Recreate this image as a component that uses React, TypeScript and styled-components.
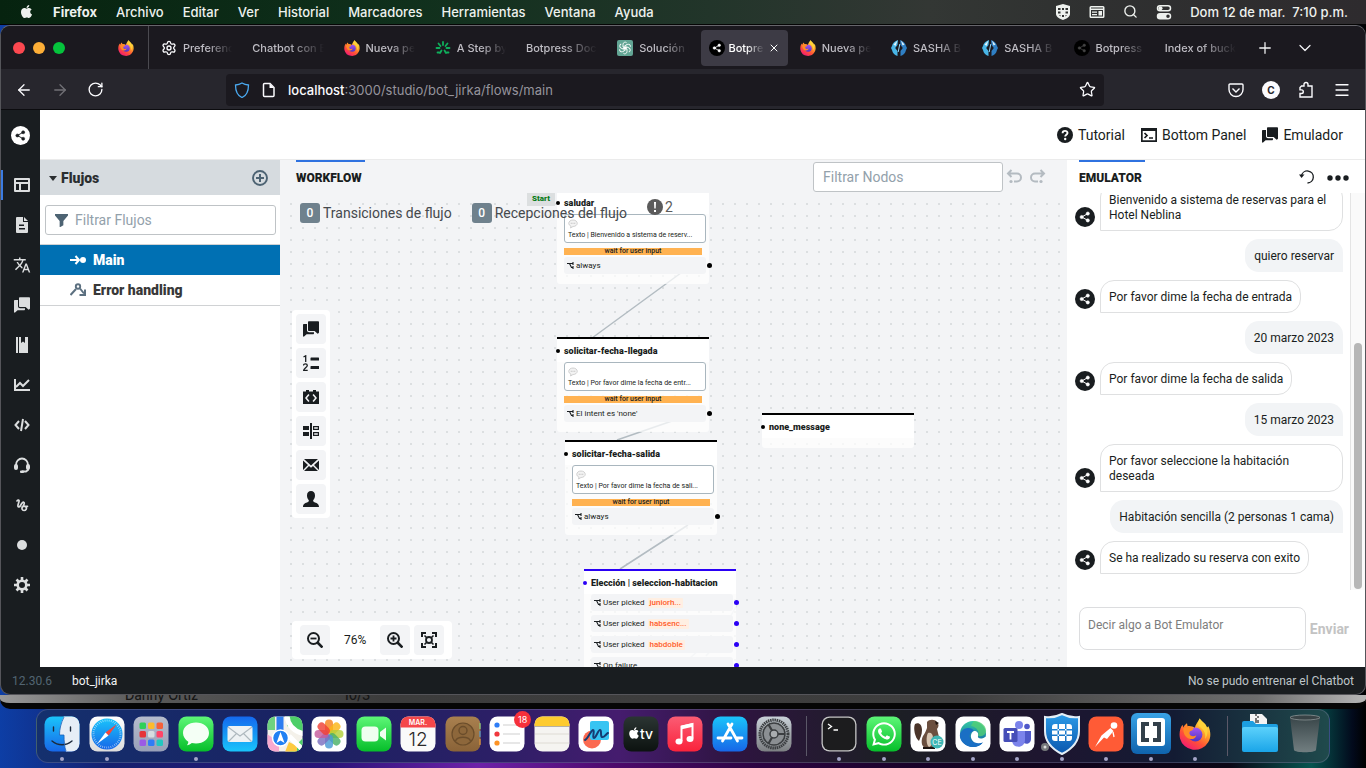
import React from "react";
import styled, { createGlobalStyle, css } from "styled-components";
import { FaApple, FaWhatsapp } from "react-icons/fa";
import { MdTranslate } from "react-icons/md";
import { Settings, Search, X, Plus, ChevronDown, Star, Menu, ArrowLeft, ArrowRight, RotateCw } from "lucide-react";

const GlobalStyle = createGlobalStyle`
  * { box-sizing: border-box; }
  body { margin: 0; background: #000; font-family: Roboto, "Liberation Sans", sans-serif; }
  button, input, textarea { font: inherit; color: inherit; }
  button { border: 0; padding: 0; background: none; cursor: pointer; }
  svg { display: block; flex: none; }
`;

const uiFont = `Inter, "Liberation Sans", sans-serif`;

/* ---------- desktop ---------- */

const Desktop = styled.div`
  height: 100vh;
  min-height: 640px;
  display: flex;
  flex-direction: column;
  overflow: hidden;
  background: linear-gradient(90deg, #0d3ea5 0%, #15206e 8%, #2a1478 24%, #6d21a8 35%, #4d0a6b 45%, #2b0440 56%, #12021f 72%, #0b0716 90%, #075550 96%, #020a1c 99%, #000 100%);
`;

const MenuBar = styled.header`
  flex: none;
  height: 25px;
  padding: 0 18px 1px 19px;
  display: flex;
  align-items: center;
  justify-content: space-between;
  color: #eef1ee;
  font: 500 13px/16px ${uiFont};
  background: linear-gradient(90deg, #06230f 0%, #10301c 30%, #22352a 52%, #333734 68%, #2f3030 80%, #2e2b2e 100%);
  border-bottom: 1px solid #050505;
`;

const MenuGroup = styled.nav<{ $gap: number }>`
  display: flex;
  align-items: center;
  gap: ${(p) => p.$gap}px;
`;

const MenuItem = styled.button<{ $bold?: boolean }>`
  font-weight: ${(p) => (p.$bold ? 700 : 500)};
`;

const Clock = styled.time`
  white-space: pre;
`;

/* ---------- browser window ---------- */

const Window = styled.section`
  flex: 1;
  min-height: 0;
  display: flex;
  flex-direction: column;
  overflow: hidden;
  background: #191d20;
  border: 1px solid #55555a;
  border-top-color: #66656b;
  border-radius: 10px;
`;

const TabStrip = styled.div`
  flex: none;
  height: 43px;
  display: flex;
  align-items: center;
  background: #1b191f;
  color: #bfbdc4;
  font: 500 11px/16px ${uiFont};
`;

const Lights = styled.div`
  width: 104px;
  flex: none;
  padding-left: 12px;
  display: flex;
  gap: 8px;
`;

const Light = styled.button<{ $color: string }>`
  width: 12px;
  height: 12px;
  border-radius: 50%;
  background: ${(p) => p.$color};
`;

const PinnedTab = styled.button`
  flex: none;
  width: 44px;
  height: 43px;
  padding-left: 13px;
  display: flex;
  align-items: center;
  border-right: 1px solid #4b4a50;
`;

const Tabs = styled.div`
  flex: 0 1 1095px;
  min-width: 0;
  margin-left: 2px;
  display: grid;
  grid-template-columns: repeat(12, minmax(0, 1fr));
`;

const Tab = styled.button<{ $active?: boolean }>`
  height: 36px;
  margin: 0 2px;
  padding: 0 8px;
  display: flex;
  align-items: center;
  gap: 6px;
  border-radius: 4px;
  ${(p) => p.$active && css`
    background: #3d3b45;
    color: #fff;
    gap: 4px;
  `}
`;

const TabLabel = styled.span`
  flex: 1;
  min-width: 0;
  overflow: hidden;
  white-space: nowrap;
  text-align: left;
  mask-image: linear-gradient(90deg, #000 50%, transparent 100%);
`;

const TabTools = styled.div`
  margin-left: 10px;
  display: flex;
  gap: 21px;
  color: #f3f3f5;
`;

const IconButton = styled.button<{ $dim?: boolean }>`
  flex: none;
  display: flex;
  align-items: center;
  justify-content: center;
  opacity: ${(p) => (p.$dim ? 0.35 : 1)};
`;

const NavBar = styled.div`
  flex: none;
  height: 41px;
  padding-top: 1px;
  display: flex;
  align-items: center;
  background: #27262d;
  border-bottom: 1px solid #0c0c0f;
  color: #fbfbfe;
`;

const NavButtons = styled.div`
  flex: none;
  width: 225px;
  padding-left: 14px;
  display: flex;
  gap: 18px;
`;

const AddressBar = styled.div`
  flex: 1;
  min-width: 0;
  height: 32px;
  padding: 0 8px;
  display: flex;
  align-items: center;
  gap: 11px;
  border-radius: 4px;
  background: #1b191f;
`;

const Address = styled.div`
  flex: 1;
  color: #96949c;
  font: 400 13px/20px ${uiFont};
  strong { color: #fbfbfe; font-weight: 500; }
`;

const NavTools = styled.div`
  flex: none;
  width: 261px;
  padding-right: 14px;
  display: flex;
  justify-content: flex-end;
  gap: 18px;
`;

const Account = styled.span`
  width: 18px;
  height: 18px;
  margin: 0 -1px;
  border-radius: 50%;
  background: #fbfbfe;
  color: #27262d;
  font: 700 10px/18px ${uiFont};
  text-align: center;
`;

/* ---------- studio ---------- */

const Studio = styled.div`
  flex: 1;
  min-height: 0;
  display: flex;
`;

const SideBar = styled.nav`
  flex: none;
  width: 39px;
  display: flex;
  flex-direction: column;
  align-items: stretch;
  background: #191d20;
  color: #dcdedf;
`;

const SideLogo = styled.a`
  height: 60px;
  padding: 16px 0 0 10px;
`;

const SideItem = styled.button<{ $active?: boolean }>`
  height: 30px;
  margin-bottom: 10px;
  padding-left: 3px;
  display: flex;
  align-items: center;
  justify-content: center;
  box-shadow: ${(p) => (p.$active ? "inset 2px 0 0 #3b7be0" : "none")};
`;

const StudioMain = styled.div`
  flex: 1;
  min-width: 0;
  display: flex;
  flex-direction: column;
  background: #fff;
`;

const TopBar = styled.div`
  flex: none;
  height: 50px;
  padding-right: 22px;
  display: flex;
  align-items: center;
  justify-content: flex-end;
  gap: 16px;
  border-bottom: 1px solid #ebebeb;
  color: #191d20;
`;

const TopAction = styled.button`
  display: flex;
  align-items: center;
  gap: 5px;
  font-size: 14px;
  line-height: 20px;
`;

const Panels = styled.div`
  flex: 1;
  min-height: 0;
  display: flex;
`;

const FlowsPanel = styled.aside`
  flex: none;
  width: 240px;
  background: #fff;
`;

const FlowsHeader = styled.div`
  height: 35px;
  padding: 0 12px 0 9px;
  display: flex;
  align-items: center;
  gap: 4px;
  background: #d6dbdf;
  color: #2b2e30;
  h2 { flex: 1; margin: 0; font-size: 14px; line-height: 20px; font-weight: 900; }
`;

const SearchBox = styled.label<{ $width?: number }>`
  height: 30px;
  padding: 0 9px;
  display: flex;
  align-items: center;
  gap: 7px;
  width: ${(p) => (p.$width ? `${p.$width}px` : "auto")};
  border: 1px solid #bfc3c6;
  border-radius: 3px;
  background: #fff;
  color: #4d6373;
  input {
    flex: 1;
    min-width: 0;
    padding: 0;
    border: 0;
    outline: 0;
    background: none;
    font-size: 14px;
    line-height: 20px;
  }
  input::placeholder { color: #93a1ab; opacity: 1; }
`;

const FlowSearch = styled.div`
  padding: 10px 4px 9px 5px;
`;

const FlowList = styled.ul`
  margin: 0;
  padding: 0;
  list-style: none;
  border-top: 1px solid #d0d2d4;
  border-bottom: 1px solid #d0d2d4;
`;

const FlowLink = styled.a<{ $active?: boolean }>`
  height: 30px;
  padding-left: 30px;
  display: flex;
  align-items: center;
  gap: 7px;
  text-decoration: none;
  font-size: 14px;
  line-height: 20px;
  font-weight: 900;
  color: ${(p) => (p.$active ? "#fff" : "#383838")};
  background: ${(p) => (p.$active ? "#0070b3" : "#fff")};
  svg { color: ${(p) => (p.$active ? "#fff" : "#5c7080")}; }
`;

const Workflow = styled.main`
  flex: 1;
  min-width: 0;
  display: flex;
  flex-direction: column;
  background: #f3f4f6;
`;

const PanelHeader = styled.div<{ $right: number; $left: number }>`
  flex: none;
  height: 33px;
  padding: 0 ${(p) => p.$right}px 0 ${(p) => p.$left}px;
  display: flex;
  align-items: center;
  justify-content: space-between;
`;

const PanelTab = styled.h2`
  height: 33px;
  margin: 0;
  padding: 8px 3px 0 0;
  border-top: 2px solid #2f72e0;
  color: #191d20;
  font-size: 12px;
  line-height: 16px;
  font-weight: 900;
`;

const HeaderTools = styled.div<{ $gap: number }>`
  display: flex;
  align-items: center;
  gap: ${(p) => p.$gap}px;
  color: #b4bbc1;
`;

/* ---------- canvas ---------- */

const Canvas = styled.div`
  flex: 1;
  min-height: 0;
  position: relative;
  overflow: hidden;
  background: conic-gradient(from 90deg at 10px 10px, #dcdfe1 25%, transparent 0) 0 0 / 12px 12px;
`;

const Links = styled.svg`
  position: absolute;
  inset: 0;
  width: 100%;
  height: 100%;
  fill: none;
  stroke: #b3bcc2;
  stroke-width: 1.5;
`;

const Node = styled.article<{ $x: number; $y: number; $color: string }>`
  position: absolute;
  left: ${(p) => p.$x}px;
  top: ${(p) => p.$y}px;
  width: 152px;
  padding-bottom: 10px;
  border-top: 2px solid ${(p) => p.$color};
  border-radius: 0 0 3px 3px;
  background: rgba(255, 255, 255, 0.7);
  color: #191d20;
  font-size: 7px;
  line-height: 10px;
`;

const NodeTitle = styled.h3`
  position: relative;
  height: 23px;
  margin: 0;
  padding: 6px 0 0 7px;
  background: #fff;
  font-size: 9px;
  line-height: 12px;
  font-weight: 900;
  white-space: nowrap;
`;

const Port = styled.i<{ $color: string; $out?: boolean }>`
  position: absolute;
  width: ${(p) => (p.$out ? 5 : 4)}px;
  height: ${(p) => (p.$out ? 5 : 4)}px;
  border-radius: 50%;
  background: ${(p) => p.$color};
  ${(p) => (p.$out ? "right: -6px; top: 6px;" : "left: -1px; top: 10px;")}
`;

const MessageBox = styled.div`
  height: 29px;
  margin: 0 3px 5px 7px;
  padding: 4px 3px 0;
  border: 1px solid #a9b6be;
  border-radius: 3px;
  background: #fff;
  line-height: 12px;
  p { margin: 0; white-space: nowrap; }
`;

const WaitBar = styled.div`
  height: 7px;
  margin: 0 7px 2px;
  background: #ffb251;
  font-weight: 500;
  line-height: 7px;
  text-align: center;
`;

const Row = styled.div<{ $gap: number }>`
  position: relative;
  height: 17px;
  margin: 0 3px ${(p) => p.$gap}px 7px;
  padding-left: 3px;
  display: flex;
  align-items: center;
  gap: 2px;
  border-radius: 3px;
  background: #f3f4f6;
  font-size: 8px;
`;

const Pick = styled.em`
  margin-left: 1px;
  padding: 0 2px;
  border-radius: 1px;
  background: #ffefe2;
  color: #ff5c28;
  font-style: normal;
  font-weight: 500;
`;

const StartTag = styled.span`
  position: absolute;
  left: 247px;
  top: 0;
  width: 28px;
  height: 13px;
  background: #dcdfe0;
  color: #0a7d1c;
  font-size: 8px;
  line-height: 12px;
  font-weight: 900;
  text-align: center;
`;

const Counters = styled.div`
  position: absolute;
  left: 20px;
  top: 4px;
  display: flex;
  align-items: flex-end;
  gap: 20px;
  color: #45494d;
  font-size: 14px;
  line-height: 20px;
`;

const Counter = styled.span`
  display: flex;
  gap: 3px;
  b {
    width: 20px;
    border-radius: 3px;
    background: #6f818d;
    color: #fff;
    font-size: 12px;
    font-weight: 500;
    text-align: center;
  }
`;

const Warning = styled.span`
  height: 20px;
  margin-bottom: 6px;
  display: flex;
  align-items: center;
  gap: 2px;
  color: #5b5b5b;
`;

const ToolPalette = styled.div`
  position: absolute;
  left: 12px;
  top: 117px;
  padding: 4px;
  display: flex;
  flex-direction: column;
  gap: 4px;
  border-radius: 4px;
  background: #fff;
  color: #191d20;
`;

const Tool = styled.button`
  width: 30px;
  height: 30px;
  display: flex;
  align-items: center;
  justify-content: center;
  border-radius: 4px;
  background: #f3f4f6;
`;

const ZoomBar = styled.div`
  position: absolute;
  left: 12px;
  bottom: 8px;
  width: 160px;
  height: 38px;
  padding: 0 8px;
  display: flex;
  align-items: center;
  border-radius: 4px;
  background: #fff;
  color: #191d20;
  font-size: 12px;
  output { width: 51px; text-align: center; }
  button + button { margin-left: 4px; }
`;

/* ---------- emulator ---------- */

const Emulator = styled.aside`
  flex: none;
  width: 298px;
  display: flex;
  flex-direction: column;
  background: #fff;
  color: #191d20;
`;

const ChatScroll = styled.div`
  flex: 1;
  min-height: 0;
  display: flex;
`;

const Messages = styled.div`
  flex: 1;
  min-width: 0;
  padding: 0 7px 16px 8px;
  display: flex;
  flex-direction: column;
  justify-content: flex-end;
  gap: 8px;
  overflow: hidden;
  font-size: 12px;
  line-height: 15px;
`;

const BotLine = styled.div`
  display: flex;
  align-items: flex-end;
  gap: 5px;
  svg { margin-bottom: 4px; }
`;

const BotBubble = styled.p`
  margin: 0;
  padding: 9px 8px 7px;
  border: 1px solid #dfe0e1;
  border-radius: 14px 14px 14px 0;
`;

const UserBubble = styled.p`
  align-self: flex-end;
  margin: 0;
  padding: 10px 9px 8px;
  border-radius: 14px 14px 0 14px;
  background: #f2f4f6;
`;

const ScrollTrack = styled.div`
  flex: none;
  width: 15px;
  padding: 0 0 1px 3px;
  display: flex;
  flex-direction: column;
  justify-content: flex-end;
  border-left: 1px solid #e4e4e4;
  background: #fafafa;
`;

const ScrollThumb = styled.div`
  width: 8px;
  height: 62%;
  border-radius: 4px;
  background: #b7b7b7;
`;

const Composer = styled.form`
  flex: none;
  padding: 17px 16px 17px 12px;
  display: flex;
  align-items: center;
  gap: 4px;
  textarea {
    flex: 1;
    min-width: 0;
    height: 43px;
    padding: 9px 8px;
    resize: none;
    outline: 0;
    border: 1px solid #dcdddf;
    border-radius: 8px;
    font-size: 12px;
    line-height: 16px;
  }
  textarea::placeholder { color: #7d7d7d; opacity: 1; }
  button { color: #c3c3c3; font-size: 14px; font-weight: 700; }
`;

const StatusBar = styled.footer`
  flex: none;
  height: 27px;
  padding: 0 11px;
  display: flex;
  align-items: center;
  color: #bfc6ca;
  font-size: 12px;
  line-height: 16px;
  span:first-child { width: 60px; color: #526572; }
  strong { flex: 1; color: #f2f3f4; font-weight: 400; }
`;

/* ---------- back window and dock ---------- */

const BackWindow = styled.div`
  flex: none;
  height: 14px;
  padding: 0 0 0 125px;
  display: flex;
  gap: 145px;
  overflow: hidden;
  border-bottom: 6px solid #060606;
  border-radius: 0 0 10px 10px;
  background: linear-gradient(90deg, #9a9a9a 0%, #5a5a5a 10%, #3c3c3c 28%, #3e3e3e 70%, #6d6d6d 92%, #b5b5b5 100%);
  color: #161616;
  font: 500 13px/8px ${uiFont};
  span { margin-top: -4px; }
`;

const Dock = styled.nav`
  flex: none;
  height: 54px;
  margin: 0 36px 5px;
  padding: 0 6px 0 7px;
  display: flex;
  align-items: center;
  justify-content: space-between;
  border: 1px solid rgba(150, 150, 190, 0.3);
  border-radius: 12px;
  background: linear-gradient(90deg, #14306e 0%, #1a2262 20%, #2b1f66 35%, #451c6e 45%, #2e1440 54%, #1c1f24 66%, #1e1530 78%, #131b33 88%, #1f4a4c 100%);
`;

const DockItem = styled.button<{ $running?: boolean }>`
  position: relative;
  width: 36px;
  height: 36px;
  margin-bottom: 4px;
  display: flex;
  align-items: center;
  justify-content: center;
  ${(p) => p.$running && css`
    &::after {
      content: "";
      position: absolute;
      left: 16px;
      bottom: -9px;
      width: 4px;
      height: 4px;
      border-radius: 50%;
      background: #a5a5c8;
    }
  `}
`;

const DockBadge = styled.span`
  position: absolute;
  right: -6px;
  top: -5px;
  width: 17px;
  height: 17px;
  border-radius: 50%;
  background: #f5303a;
  color: #fff;
  font: 400 9px/17px ${uiFont};
  text-align: center;
`;

const DockSeparator = styled.span`
  width: 12px;
  height: 40px;
  background: linear-gradient(#5b5868 0 0) center / 1px 100% no-repeat;
`;

/* ---------- icons ---------- */

type IconProps = { size?: number; box?: number; children: React.ReactNode };
const Icon = ({ size = 16, box = 16, children }: IconProps) => (
  <svg width={size} height={size} viewBox={`0 0 ${box} ${box}`} fill="currentColor" aria-hidden="true">
    {children}
  </svg>
);
const line = (w: number) => ({ fill: "none", stroke: "currentColor", strokeWidth: w });

const ChatIcon = () => (
  <Icon>
    <path d="M6.500 11.200A2 2 0 0 1 4 9.200V3H1c-.55 0-1 .45-1 1v11.200l.8.5L3.600 13.200H10c.55 0 1-.45 1-1v-1z" />
    <path d="M15 .3H6c-.55 0-1 .45-1 1V9c0 .55.45 1 1 1h5.600l3 2.700 1.200-.6.2-.8V1.300c0-.55-.45-1-1-1z" />
  </Icon>
);

const ShareIcon = ({ size, bg, fg }: { size: number; bg: string; fg: string }) => (
  <Icon size={size} box={20}>
    <circle cx="10" cy="10" r="10" fill={bg} />
    <g fill={fg} stroke={fg}>
      <circle cx="6.700" cy="10" r="1.600" strokeWidth=".6" />
      <circle cx="12.800" cy="6.600" r="1.600" strokeWidth=".6" />
      <circle cx="12.800" cy="13.400" r="1.600" strokeWidth=".6" />
      <path d="M12.800 6.600 6.700 10l6.100 3.400" fill="none" strokeWidth="1" />
    </g>
  </Icon>
);

const FirefoxLogo = ({ size }: { size: number }) => (
  <Icon size={size}>
    <defs>
      <linearGradient id="fxBody" x1=".85" y1="0" x2=".2" y2="1">
        <stop offset="0" stopColor="#fff44f" />
        <stop offset=".35" stopColor="#ffa52a" />
        <stop offset=".65" stopColor="#ff5236" />
        <stop offset="1" stopColor="#f1127c" />
      </linearGradient>
      <linearGradient id="fxGlobe" x1="0" y1="0" x2="0" y2="1">
        <stop offset="0" stopColor="#a456f0" />
        <stop offset="1" stopColor="#4b34c4" />
      </linearGradient>
    </defs>
    <path fill="url(#fxBody)" d="M10.300.2c1 1.300 2 1.900 2.900 3 .5.700.6 1 .8 1.600l.7-.7c1.200 2.600 1.400 5.600-.1 8A7.700 7.700 0 0 1 .5 10.200C-.1 7.300.6 4.900 1.800 3.400l.3 1.300C2.700 3.700 3.300 3 4 2.600l.3 1.500c1.500-.2 2.700.200 3.600.9C8.200 3.100 9.500 2 10.300.2z" />
    <circle cx="8.200" cy="8.300" r="3.500" fill="url(#fxGlobe)" />
    <path fill="#ff8a26" d="M2.200 5.200c1.500-.9 3.600-.9 5 .1 0 .8-.9 1.100-1.700 1.300-.5.700-.3 1.500.300 2.100.8.600 2 .4 2.900-.1-.5 1.600-2 2.300-3.500 1.800C3.200 9.700 2 7.500 2.200 5.200z" />
    <path fill="#ffd43a" d="M10.300.2c1 1.300 2 1.900 2.900 3 1.400 2.200 1.500 5-.1 7.300.4-2.900-.8-4.900-3.100-6.200C9.200 3.300 9.700 1.600 10.300.2z" opacity=".85" />
  </Icon>
);

const GptLogo = () => (
  <Icon>
    <rect width="16" height="16" rx="2" fill="#62a594" />
    <g fill="none" stroke="#fff" strokeWidth=".9">
      {[0, 60, 120, 180, 240, 300].map((a) => (
        <path key={a} transform={`rotate(${a} 8 8)`} d="M6 7V4.300a2.200 2.200 0 0 1 3.600-1.600M6 6.900l4 2.300" />
      ))}
    </g>
  </Icon>
);

const LeafLogo = () => (
  <Icon>
    <g stroke="#0fae5b" strokeWidth="1.800" strokeLinecap="round">
      <path d="M8 2v3M3.500 3.500 5.500 6M12.500 3.500l-2 2.500M1.500 8h3M14.500 8h-3M4 12.500H2.500M6.500 10.500 5 13M9.500 10.500 11 13M12 12.500h1.500" />
    </g>
  </Icon>
);

const SashaLogo = () => (
  <Icon>
    <path d="M7 0C4 1 1.500 3 1 6L0 8l1 2c.5 3 3 5.500 5.500 6V11L4.200 8 6.500 5z" fill="#48b5e6" />
    <path d="M9 0c3 1 5.500 3 6 6l1 2-1 2c-.5 3-3 5.500-5.500 6V11L11.800 8 9.500 5z" fill="#2f7fc4" />
    <path d="M6.500.5 2.500 4.500l2 1.500zM10 .5l3.500 4-2 1z" fill="#e2f5fc" />
    <path d="m7.200 12 1.600-8" stroke="#8fd3f2" strokeWidth="1" />
  </Icon>
);

const ConditionIcon = () => (
  <Icon size={7} box={14}>
    <path {...line(2.200)} d="M0 3h5l4 8h4M6 3h7M12 0v6M12 8v6" />
  </Icon>
);

const BubbleIcon = () => (
  <Icon size={10} box={20}>
    <path fill="#f3f3f3" stroke="#c4c4c4" strokeWidth="1.500" d="M10 2c5 0 8.500 3 8.500 6.500S15 15 10 15l-5 3 1-3.700C3 13 1.500 11 1.500 8.500 1.500 5 5 2 10 2z" />
    <path stroke="#aaa" strokeWidth="1.500" strokeDasharray="2 1.500" d="M5.500 8.500h9" />
  </Icon>
);

const sideIcons: React.ReactNode[] = [
  <Icon key="layout"><path fillRule="evenodd" d="M1 1h14a1 1 0 0 1 1 1v12a1 1 0 0 1-1 1H1a1 1 0 0 1-1-1V2a1 1 0 0 1 1-1zm1 2v2h12V3zm0 4v6h3V7zm5 0v6h7V7z" /></Icon>,
  <Icon key="document"><path fillRule="evenodd" d="M2.500 0H9v5h5v10a1 1 0 0 1-1 1H3a1 1 0 0 1-1-1V1zM10 0l4 4h-4zM5 7.500V9h5V7.500zM5 11v1.500h6V11z" /></Icon>,
  <MdTranslate key="translate" size={18} />,
  <ChatIcon key="chat" />,
  <Icon key="book"><path d="M2 0h2v16H2zM5 0h2v6l2-1.500L11 6V0h3v16H5z" /></Icon>,
  <Icon key="chart"><path {...line(2)} d="M1 2v11h15M2 10l4-4 3 3 6-6" /></Icon>,
  <Icon key="code"><path {...line(2)} d="M5 4 1.500 8 5 12M11 4l3.500 4L11 12M9 2 7 14" /></Icon>,
  <Icon key="headset"><path {...line(1.800)} d="M2 8a6 6.500 0 0 1 12 0v5l-2 1.500H8" /><rect y="7" width="4" height="6" rx="2" /><rect x="12" y="7" width="4" height="6" rx="2" /><rect x="6" y="13.500" width="4" height="2.500" rx="1" /></Icon>,
  <Icon key="gesture"><path {...line(1.700)} strokeLinecap="round" d="M3 4c.5-1.500 2.500-1.200 2 .5L4 8c-.5 2.500 1.500 2.500 2.500.5S9 4.500 10 5.500s-.5 3-1.500 4.500-.5 3.500 1.500 3.500 3-2 2-3.500-3-.5-4 0M10.500 9.300h3" /></Icon>,
  <Icon key="record"><circle cx="8" cy="8" r="5" /></Icon>,
  <Icon key="cog">
    <circle cx="8" cy="8" r="4.300" {...line(2.600)} />
    <path {...line(2.600)} d="M8 0v3M8 13v3M0 8h3M13 8h3M2.500 2.500l2 2M11.500 11.500l2 2M13.500 2.500l-2 2M4.500 11.500l-2 2" />
  </Icon>,
];

const sideNames = ["Flujos", "Contenido", "Traducciones", "Conversaciones", "Biblioteca", "Analítica", "Código", "Soporte", "NLU", "Estado", "Configuración"];

const toolIcons: React.ReactNode[] = [
  <ChatIcon key="say" />,
  <Icon key="choice"><path {...line(1.300)} d="M.5 2 2.700.8V7M.5 10.500c0-2.200 3.800-2 3.800 0C4.300 12 .7 13.500.7 15.300h4" /><path d="M8 2.500h7.500a.5.5 0 0 1 .5.500v2.500H7.500V3zM8 11h8v3H7.500v-2.500z" /></Icon>,
  <Icon key="execute"><path fillRule="evenodd" d="M3 1h3v1.500h4V1h3v1.500h3V15H0V2.500h3zm3.500 5L5.300 5 2 9l3.300 4 1.200-1L4 9zm3 0L12 9l-2.500 3 1.200 1L14 9l-3.300-4z" /></Icon>,
  <Icon key="router"><path d="M7 0h2v16H7zM0 3h6v4H0zM0 9h6v4H0z" /><path {...line(1.200)} d="M10.600 3.600h4.800v2.800h-4.800zM10.600 9.600h4.800v2.800h-4.800z" /></Icon>,
  <Icon key="email"><path d="M0 3.500v9.500l5-5zM1 2l7 6.500L15 2zM16 3.500V13l-5-5zM6 9l-5 5h14l-5-5-2 1.800z" /></Icon>,
  <Icon key="person"><path d="M8 0c2.500 0 4 1.500 4 4.500 0 2-.8 3.500-1.800 4.800-.3 1.200.3 1.700 1.800 2.200 2.200.8 4 1.500 4 4.500H0c0-3 1.800-3.700 4-4.500 1.500-.5 2.100-1 1.800-2.200C4.800 8 4 6.500 4 4.500 4 1.500 5.500 0 8 0z" /></Icon>,
];

const ZoomIcon = ({ plus }: { plus?: boolean }) => (
  <Icon>
    <circle cx="6.500" cy="6.500" r="5.500" {...line(2)} />
    <path {...line(2.600)} d="m10.500 10.500 5 5" />
    <path {...line(1.800)} d={plus ? "M3.500 6.500h6M6.500 3.500v6" : "M3.500 6.500h6"} />
  </Icon>
);

const UndoIcon = ({ flip }: { flip?: boolean }) => (
  <Icon>
    <g transform={flip ? "matrix(-1 0 0 1 16 0)" : undefined}>
      <path {...line(2)} d="M5.500 1 2 4.500 5.500 8M2 4.500h9a3.500 3.500 0 0 1 0 8H8" />
      <circle cx="5" cy="12.500" r="1.600" />
    </g>
  </Icon>
);

/* ---------- dock artwork ---------- */

const Tile = ({ fill, children }: { fill: string; children?: React.ReactNode }) => (
  <svg width="36" height="36" viewBox="0 0 36 36" aria-hidden="true">
    <rect x=".5" y=".5" width="35" height="35" rx="8" fill={fill} />
    {children}
  </svg>
);

const Gradients = () => (
  <svg width="0" height="0" style={{ position: "absolute" }} aria-hidden="true">
    <defs>
      {[
        ["gBlue", "#1ac4fb", "#1767e8"],
        ["gMail", "#1468ee", "#19c5fb"],
        ["gGreen", "#5df777", "#06be2a"],
        ["gGrey", "#b5bccd", "#98a0b8"],
        ["gWhite", "#ffffff", "#dcdcdc"],
        ["gBrown", "#a9804f", "#8a6338"],
        ["gTv", "#2b3533", "#0c1210"],
        ["gMusic", "#fb5c74", "#fa233b"],
        ["gSys", "#c9d1d8", "#7c7f82"],
        ["gShield", "#2b9be8", "#0a56ad"],
        ["gFolder", "#5cd1fb", "#1aa5e8"],
        ["gBracket", "#39a3e6", "#0f63ad"],
        ["gEdge", "#35c9a4", "#0c59a4"],
        ["gTrash", "#3c4649", "#7b8587"],
      ].map(([id, a, b]) => (
        <linearGradient key={id} id={id} x1="0" y1="0" x2="0" y2="1">
          <stop offset="0" stopColor={a} />
          <stop offset="1" stopColor={b} />
        </linearGradient>
      ))}
      <clipPath id="tileClip"><rect x=".5" y=".5" width="35" height="35" rx="8" /></clipPath>
    </defs>
  </svg>
);

const petals = ["#f5821f", "#fbb416", "#b3cf3b", "#4bb166", "#4a9ad4", "#7b6fc0", "#c65b9c", "#ef4136"];
const padColors = ["#2fd058", "#fdbb2c", "#f5603a", "#e5343a", "#d6dde0", "#ff4468", "#9b5ae5", "#2f7df6", "#22c7c0"];

type DockApp = { name: string; running?: boolean; badge?: string; art: React.ReactNode };

const leftApps: DockApp[] = [
  { name: "Finder", running: true, art: (
    <Tile fill="url(#gBlue)">
      <path clipPath="url(#tileClip)" fill="#e6eef6" d="M20 0c-3 6-4.500 12-4.500 19H20c0 6 .5 12 2 17h14V0z" />
      <path d="M9.500 11v4M26.500 11v4M8 25c6 5 14 5 20 0" fill="none" stroke="#1c2a3d" strokeWidth="1.400" strokeLinecap="round" />
      <path d="M20 1c-3 6-4.500 12-4.500 18H20c0 6 .5 12 2 16" fill="none" stroke="#1d5fb8" strokeWidth=".8" />
    </Tile>) },
  { name: "Safari", running: true, art: (
    <Tile fill="url(#gWhite)">
      <circle cx="18" cy="18" r="15.500" fill="url(#gBlue)" />
      <circle cx="18" cy="18" r="13.500" fill="none" stroke="#fff" strokeWidth="2" strokeDasharray=".6 1.500" opacity=".7" />
      <path fill="#f5463c" d="m28 8-8.500 11.500-3-3z" /><path fill="#fff" d="m8 28 8.500-11.500 3 3z" />
    </Tile>) },
  { name: "Launchpad", art: (
    <Tile fill="url(#gGrey)">
      {padColors.map((c, i) => <rect key={c} x={6.500 + (i % 3) * 8.500} y={6.500 + Math.floor(i / 3) * 8.500} width="6.500" height="6.500" rx="1.500" fill={c} />)}
    </Tile>) },
  { name: "Mensajes", running: true, art: (
    <Tile fill="url(#gGreen)">
      <path fill="#f4fff5" d="M18 6.500c7.500 0 13 4.500 13 10.500s-5.500 10.500-13 10.500c-1.500 0-3-.2-4.200-.5-1.300 1.300-3 2-5 2.200 1-1 1.500-2.200 1.500-3.500C7 23.500 5 20.500 5 17 5 11 10.500 6.500 18 6.500z" />
    </Tile>) },
  { name: "Mail", art: (
    <Tile fill="url(#gMail)">
      <rect x="5.500" y="10" width="25" height="16" rx="2" fill="#eef2f4" />
      <path d="m6 11 12 9 12-9M6.500 25.500l8-8M29.500 25.500l-8-8" fill="none" stroke="#aeb8be" strokeWidth="1.100" />
    </Tile>) },
  { name: "Mapas", art: (
    <Tile fill="#f4f1ea">
      <g clipPath="url(#tileClip)">
        <path fill="#4ccf68" d="M20 0h16v16L20 10zM22 36l14-14v14z" />
        <path fill="#f7a9cf" d="M0 18l12 8v10H0z" />
        <path fill="#fdca40" d="M22 26l8 4v6H18z" />
        <path fill="#6ed27f" d="M0 0h8v14H0z" />
        <path stroke="#2d7df0" strokeWidth="7" d="M13 0v26" />
        <path stroke="#fff" strokeWidth="5" fill="none" d="M20-2c0 12 8 18 18 20M22 20l14 14" />
        <circle cx="13.500" cy="22" r="8" fill="#2080f3" stroke="#fff" strokeWidth="1.500" />
        <path fill="#fff" d="m13.500 16 4 11-4-2.500-4 2.500z" />
      </g>
    </Tile>) },
  { name: "Fotos", art: (
    <Tile fill="#fff">
      {petals.map((c, i) => <rect key={c} x="14" y="3.500" width="8" height="14" rx="4" fill={c} opacity=".82" transform={`rotate(${i * 45} 18 18)`} />)}
    </Tile>) },
  { name: "FaceTime", art: (
    <Tile fill="url(#gGreen)">
      <rect x="5.500" y="10.500" width="17" height="15" rx="4" fill="#effff0" /><path fill="#effff0" d="m24 16 6-4.500v13L24 20z" />
    </Tile>) },
  { name: "Calendario", art: (
    <Tile fill="#fafafa">
      <path clipPath="url(#tileClip)" fill="#f5474a" d="M0 0h36v11.500H0z" />
      <text x="18" y="9" textAnchor="middle" fontSize="7" fontWeight="600" fontFamily="Inter" fill="#fff">MAR.</text>
      <text x="18" y="29.500" textAnchor="middle" fontSize="19" fontFamily="Inter" fontWeight="300" fill="#2a2a2a">12</text>
    </Tile>) },
  { name: "Contactos", art: (
    <Tile fill="url(#gBrown)">
      <circle cx="18" cy="18" r="11" fill="#8d673b" stroke="#6b4d2b" strokeWidth="1.200" />
      <circle cx="18" cy="14.500" r="4" fill="none" stroke="#6b4d2b" strokeWidth="1.400" />
      <path d="M10.500 25c2-5 13-5 15 0" fill="none" stroke="#6b4d2b" strokeWidth="1.400" />
      <path d="M35 7v6" stroke="#8d8" /><path d="M35 15v6" stroke="#4aa3e8" /><path d="M35 23v6" stroke="#f0a040" />
    </Tile>) },
  { name: "Recordatorios", badge: "18", art: (
    <Tile fill="#fff">
      {["#2f7df6", "#f0383d", "#fd9426"].map((c, i) => (
        <g key={c}><circle cx="8" cy={9 + i * 9} r="2.600" fill={c} /><path d={`M14 ${9 + i * 9}h17`} stroke="#cfcfcf" /></g>
      ))}
    </Tile>) },
  { name: "Notas", art: (
    <Tile fill="#f5f4f1">
      <path clipPath="url(#tileClip)" fill="#fdcb2f" d="M0 0h36v10H0z" /><path d="M1 10.500h34" stroke="#b5b1a2" /><path d="M1 18h34M1 27h34" stroke="#dedbd4" />
    </Tile>) },
  { name: "Freeform", art: (
    <Tile fill="#fff">
      <circle cx="14" cy="23.500" r="9" fill="#fb6a51" /><rect x="12" y="5" width="19" height="19" rx="2" fill="#38c4f2" />
      <path d="M7 24c3-1 6-10 8-10s-1 8 1 8 4-8 6-8 0 6 2 7 4-3 6-4" fill="none" stroke="#163b72" strokeWidth="2" strokeLinecap="round" />
    </Tile>) },
  { name: "TV", art: (
    <Tile fill="url(#gTv)">
      <FaApple x="4.500" y="10.500" size={13} color="#fff" />
      <text x="17" y="23" fontSize="14" fontWeight="500" fontFamily="Inter" fill="#fff">tv</text>
    </Tile>) },
  { name: "Música", art: (
    <Tile fill="url(#gMusic)">
      <path d="M14.500 25V10.500l11-2.500v14.500" fill="none" stroke="#fff" strokeWidth="2" /><path stroke="#fff" strokeWidth="3.500" d="m14.500 11.500 11-2.500" />
      <ellipse cx="12" cy="25.500" rx="3.500" ry="3" fill="#fff" /><ellipse cx="23" cy="23" rx="3.500" ry="3" fill="#fff" />
    </Tile>) },
  { name: "App Store", art: (
    <Tile fill="url(#gBlue)">
      <path d="M16 8l9.500 17M20 8 10.500 25M6 22h13M24 22h6" stroke="#fff" strokeWidth="2.800" strokeLinecap="round" />
    </Tile>) },
  { name: "Ajustes", art: (
    <Tile fill="url(#gSys)">
      <circle cx="18" cy="18" r="14" fill="none" stroke="#3b3e41" strokeWidth="3" strokeDasharray="1.500 .7" />
      <circle cx="18" cy="18" r="11" fill="#8b8f93" stroke="#3b3e41" strokeWidth="1.500" />
      <circle cx="18" cy="18" r="4" fill="#a9adb0" stroke="#3b3e41" strokeWidth="1.500" />
      <path d="M22 18h7M16 14.500 12.500 8.500M16 21.500l-3.500 6" stroke="#3b3e41" strokeWidth="2.200" />
    </Tile>) },
];

const rightApps: DockApp[] = [
  { name: "Terminal", running: true, art: (
    <Tile fill="#c5c5c5">
      <rect x="1.800" y="1.800" width="32.400" height="32.400" rx="7" fill="#1c1c1e" />
      <path d="m7 8 3.500 2.500L7 13M12.500 14H17" fill="none" stroke="#fff" strokeWidth="1.300" />
    </Tile>) },
  { name: "WhatsApp", running: true, art: (
    <Tile fill="url(#gGreen)"><FaWhatsapp x="4.500" y="4.500" size={27} color="#fff" /></Tile>) },
  { name: "DBeaver", running: true, art: (
    <Tile fill="#fff">
      <path fill="#4a342a" d="M5 8c4-2 7 1 7 6s-2 8-3 11C5 22 3 12 5 8z" />
      <path fill="#6b4f3f" d="M17 6c2-3 8-3 10 0 2 2 2 5 0 7l2 8c1 6-1 10-5 11h-9c-4-2-4-8-2-12 2-3 3-5 4-8z" />
      <path fill="#d9c7b3" d="M18 17c3-1 5 1 5 5s-1 8-4 9c-3-2-3-11-1-14z" />
      <path fill="#1d1410" d="M25 5l4 2-3 2zM13 31h12v2H13z" />
      <circle cx="27" cy="26" r="6.500" fill="#3eb6b4" />
      <text x="27" y="28.500" textAnchor="middle" fontSize="7" fontFamily="Inter" fill="#fff">CE</text>
    </Tile>) },
  { name: "Edge", running: true, art: (
    <Tile fill="#fff">
      <circle cx="18" cy="18" r="13" fill="url(#gEdge)" />
      <path fill="#1a6fc4" d="M5 18C7 11 17 10 19 15c-4 1-6 5-3 9s9 3 12 2c-3 5-10 6-15 4S4 23 5 18z" />
      <path fill="#fff" d="M19 15c3 0 5 2 4 5-.5 1.500 1 3 4 2.500 2-.5 4-2 4-2l1 4-4 2c-4 1.500-9 1-11-2.500-2.500-4-.5-8 2-9z" />
      <path fill="#55d072" d="M19 5c8 0 13 6 12 11-1 4-6 5-8 4 2-4-1-9-7-10 1-3 3-5 3-5z" opacity=".75" />
    </Tile>) },
  { name: "Teams", running: true, art: (
    <Tile fill="#fff">
      <circle cx="20" cy="9" r="4" fill="#7b83eb" /><circle cx="28" cy="10.500" r="2.800" fill="#5059c9" />
      <path fill="#5059c9" d="M24 15h8v8c0 4-4 6-7 4z" /><path fill="#7b83eb" d="M13 15h13v9c0 9-13 9-13 0z" />
      <rect x="4.500" y="12" width="14" height="14" rx="1.500" fill="#464eb8" /><path d="M8 16h7M11.500 16v7.500" stroke="#fff" strokeWidth="1.800" />
    </Tile>) },
  { name: "FortiClient", running: true, art: (
    <svg width="36" height="36" viewBox="0 0 36 36" aria-hidden="true" overflow="visible">
      <path transform="translate(0 -2)" fill="url(#gShield)" stroke="#e4eef6" strokeWidth="2" d="M1 3c6 1 11 0 17-3 6 3 11 4 17 3v14c0 11-7 18-17 23C8 35 1 28 1 17z" />
      <path fill="#fff" fillRule="evenodd" d="M11 8h14a3 3 0 0 1 3 3v11a3 3 0 0 1-3 3H11a3 3 0 0 1-3-3V11a3 3 0 0 1 3-3zm2.500 0v17H15V8zM21 8v17h1.500V8zM8 13v1.500h20V13zm0 5.500V20h20v-1.500z" />
      <circle cx="1" cy="31" r="4" fill="#76797b" /><circle cx="1" cy="31" r="1.500" fill="#ddd" />
    </svg>) },
  { name: "Postman", running: true, art: (
    <Tile fill="#ff5b36">
      <circle cx="26" cy="9.500" r="3.300" fill="#fff" /><path fill="#fff" d="m22.500 12 3 3-6.500 8-3-1.500-9 9.500 6.500-11.500z" /><path d="m25 16 1 5" stroke="#fff" strokeWidth="1.300" />
    </Tile>) },
  { name: "Brackets", running: true, art: (
    <svg width="36" height="36" viewBox="0 0 36 36" overflow="visible" aria-hidden="true">
      <rect x="-2" y="-3" width="40" height="41" rx="6" fill="url(#gBracket)" /><rect x="4" y="2" width="28" height="28" rx="3" fill="#fff" />
      <path d="M16 8h-6v16h6M20 8h6v16h-6" fill="none" stroke="#33404a" strokeWidth="4" />
    </svg>) },
  { name: "Firefox", running: true, art: <FirefoxLogo size={32} /> },
];

const placeApps: DockApp[] = [
  { name: "Descargas", art: (
    <svg width="36" height="36" viewBox="0 0 36 36" overflow="visible" aria-hidden="true">
      <path fill="#f3f3f3" d="M8-2h12l5 5v12H8z" /><path fill="#777" d="M13-2h2v2h-2zM15 0h2v2h-2zM13 2h2v2h-2zM15 4h2v3h-4V4z" />
      <path fill="#1d9fe0" d="M0 7a2 2 0 0 1 2-2h9l3 3h20a2 2 0 0 1 2 2v6H0z" /><rect y="11" width="36" height="25" rx="2" fill="url(#gFolder)" />
    </svg>) },
  { name: "Papelera", art: (
    <svg width="36" height="36" viewBox="0 0 36 36" overflow="visible" aria-hidden="true">
      <path fill="url(#gTrash)" d="M3 1h30l-4 33c-.5 3-21.500 3-22 0z" opacity=".9" /><ellipse cx="18" cy="1.500" rx="15" ry="2.500" fill="#394346" stroke="#8b9496" strokeWidth=".8" />
    </svg>) },
];

/* ---------- data ---------- */

const menus = ["Archivo", "Editar", "Ver", "Historial", "Marcadores", "Herramientas", "Ventana", "Ayuda"];

const tabs: { label: string; icon?: React.ReactNode; active?: boolean }[] = [
  { label: "Preferenc", icon: <Settings size={16} strokeWidth={2} color="#fbfbfe" /> },
  { label: "Chatbot con E" },
  { label: "Nueva pe", icon: <FirefoxLogo size={16} /> },
  { label: "A Step by", icon: <LeafLogo /> },
  { label: "Botpress Doc" },
  { label: "Solución p", icon: <GptLogo /> },
  { label: "Botpre", icon: <ShareIcon size={16} bg="#000" fg="#fff" />, active: true },
  { label: "Nueva pe", icon: <FirefoxLogo size={16} /> },
  { label: "SASHA B", icon: <SashaLogo /> },
  { label: "SASHA B", icon: <SashaLogo /> },
  { label: "Botpress", icon: <ShareIcon size={16} bg="#000" fg="#444" /> },
  { label: "Index of buck" },
];

const stepNodes = [
  { x: 277, y: -4, title: "saludar", text: "Texto | Bienvenido a sistema de reserv...", next: "always" },
  { x: 277, y: 144, title: "solicitar-fecha-llegada", text: "Texto | Por favor dime la fecha de entr...", next: "El intent es 'none'" },
  { x: 285, y: 247, title: "solicitar-fecha-salida", text: "Texto | Por favor dime la fecha de sali...", next: "always" },
];

const picks = ["juniorh...", "habsenc...", "habdoble"];

const chat: { from: "bot" | "user"; text: string }[] = [
  { from: "bot", text: "Bienvenido a sistema de reservas para el Hotel Neblina" },
  { from: "user", text: "quiero reservar" },
  { from: "bot", text: "Por favor dime la fecha de entrada" },
  { from: "user", text: "20 marzo 2023" },
  { from: "bot", text: "Por favor dime la fecha de salida" },
  { from: "user", text: "15 marzo 2023" },
  { from: "bot", text: "Por favor seleccione la habitación deseada" },
  { from: "user", text: "Habitación sencilla (2 personas 1 cama)" },
  { from: "bot", text: "Se ha realizado su reserva con exito" },
];

const DockGroup = ({ apps }: { apps: DockApp[] }) => (
  <>
    {apps.map((a) => (
      <DockItem key={a.name} $running={a.running} aria-label={a.name}>
        {a.art}
        {a.badge && <DockBadge>{a.badge}</DockBadge>}
      </DockItem>
    ))}
  </>
);

const WorkflowCanvas = () => (
  <Canvas>
    <Links>
      <path d="M405 77 312 145M392 228l-55 19M408 332l-68 44" />
      <path d="M457 412l-8 14M430 447l-20 18M440 447l-14 16" stroke="#dfe3e6" />
    </Links>
    <StartTag>Start</StartTag>
    {stepNodes.map((n) => (
      <Node key={n.title} $x={n.x} $y={n.y} $color="#000">
        <NodeTitle>{n.title}<Port $color="#000" /></NodeTitle>
        <MessageBox>
          <BubbleIcon />
          <p>{n.text}</p>
        </MessageBox>
        <WaitBar>wait for user input</WaitBar>
        <Row $gap={0}><ConditionIcon />{n.next}<Port $color="#000" $out /></Row>
      </Node>
    ))}
    <Node $x={482} $y={220} $color="#000">
      <NodeTitle>none_message<Port $color="#000" /></NodeTitle>
    </Node>
    <Node $x={304} $y={376} $color="#2a00f5">
      <NodeTitle>Elección | seleccion-habitacion<Port $color="#2a00f5" /></NodeTitle>
      {picks.map((p) => (
        <Row key={p} $gap={4}><ConditionIcon />User picked <Pick>{p}</Pick><Port $color="#2a00f5" $out /></Row>
      ))}
      <Row $gap={4}><ConditionIcon />On failure<Port $color="#2a00f5" $out /></Row>
    </Node>

    <Counters>
      <Counter><b>0</b>Transiciones de flujo</Counter>
      <Counter><b>0</b>Recepciones del flujo</Counter>
      <Warning>
        <Icon><circle cx="8" cy="8" r="8" /><path d="M7 3h2l-.3 6.500H7.300zM7 11h2v2H7z" fill="#fff" /></Icon>
        2
      </Warning>
    </Counters>

    <ToolPalette>
      {toolIcons.map((icon, i) => <Tool key={i} aria-label={`Nodo ${i + 1}`}>{icon}</Tool>)}
    </ToolPalette>

    <ZoomBar>
      <Tool aria-label="Alejar"><ZoomIcon /></Tool>
      <output>76%</output>
      <Tool aria-label="Acercar"><ZoomIcon plus /></Tool>
      <Tool aria-label="Ajustar">
        <Icon><path {...line(2)} d="M1 5V1h4M11 1h4v4M15 11v4h-4M5 15H1v-4" /><circle cx="8" cy="8" r="3" {...line(1.800)} /><path {...line(1.600)} d="m3.500 3.500 2 2M12.500 3.500l-2 2M3.500 12.500l2-2M12.500 12.500l-2-2" /></Icon>
      </Tool>
    </ZoomBar>
  </Canvas>
);

export default function App() {
  return (
    <Desktop>
      <GlobalStyle />
      <Gradients />
      <MenuBar>
        <MenuGroup $gap={19}>
          <FaApple size={15} />
          <MenuItem $bold>Firefox</MenuItem>
          {menus.map((m) => <MenuItem key={m}>{m}</MenuItem>)}
        </MenuGroup>
        <MenuGroup $gap={18}>
          <Icon><path fillRule="evenodd" d="M1 2l7-2 7 2v8c0 3-4 5-7 6-3-1-7-3-7-6zm2 2v2h2.500V4zm4 0v2h2V4zm3.500 0v2H13V4zM3 7.500v2h2.500v-2zm7.500 0v2H13v-2zM4 11l1.500 1.500V11zm3 0v2h2v-2zm3.500 0v1.500L12 11z" /></Icon>
          <Icon><path fillRule="evenodd" d="M2 2h12a1.500 1.500 0 0 1 1.500 1.500v9A1.500 1.500 0 0 1 14 14H2a1.500 1.500 0 0 1-1.500-1.500v-9A1.500 1.500 0 0 1 2 2zm0 1.500v1h12v-1zM2 6v6.500h12V6z" /><path d="M3 7.500h5v1.200H3zM3 10h5v1.200H3zM9.500 7h3.500v4.500H9.500z" /></Icon>
          <Search size={15} strokeWidth={2.200} />
          <Icon><path fillRule="evenodd" d="M4 1h8a3.200 3.200 0 0 1 0 6.500H4A3.200 3.200 0 0 1 4 1zm0 1.500a1.700 1.700 0 1 0 0 3.500h8a1.700 1.700 0 1 0 0-3.500z" /><circle cx="4.500" cy="4.250" r="2" /><path fillRule="evenodd" d="M4 9h8a3.200 3.200 0 0 1 0 6.500H4A3.200 3.200 0 0 1 4 9zm8 1.500a1.700 1.700 0 1 0 0 3.500 1.700 1.700 0 1 0 0-3.500z" /></Icon>
          <Clock>Dom 12 de mar.  7:10 p.m.</Clock>
        </MenuGroup>
      </MenuBar>

      <Window>
        <TabStrip>
          <Lights>
            <Light $color="#fc4850" aria-label="Cerrar" />
            <Light $color="#fdae37" aria-label="Minimizar" />
            <Light $color="#05c33c" aria-label="Maximizar" />
          </Lights>
          <PinnedTab aria-label="Firefox View"><FirefoxLogo size={16} /></PinnedTab>
          <Tabs>
            {tabs.map((t, i) => (
              <Tab key={i} $active={t.active}>
                {t.icon}
                <TabLabel>{t.label}</TabLabel>
                {t.active && <X size={12} strokeWidth={2} />}
              </Tab>
            ))}
          </Tabs>
          <TabTools>
            <IconButton aria-label="Nueva pestaña"><Plus size={18} strokeWidth={1.700} /></IconButton>
            <IconButton aria-label="Lista de pestañas"><ChevronDown size={20} strokeWidth={1.500} /></IconButton>
          </TabTools>
        </TabStrip>

        <NavBar>
          <NavButtons>
            <IconButton aria-label="Atrás"><ArrowLeft size={18} strokeWidth={1.700} /></IconButton>
            <IconButton $dim aria-label="Adelante"><ArrowRight size={18} strokeWidth={1.700} /></IconButton>
            <IconButton aria-label="Recargar"><RotateCw size={17} strokeWidth={1.900} /></IconButton>
          </NavButtons>
          <AddressBar>
            <Icon><path d="M8 1C6 2.200 4 2.800 1.500 3 1.500 9 3 13.500 8 15.500 13 13.500 14.500 9 14.500 3 12 2.800 10 2.200 8 1z" fill="none" stroke="#4aa8ee" strokeWidth="1.300" /></Icon>
            <Icon><path {...line(1.500)} d="M3.500 1.500h5.500l4 4v8a1 1 0 0 1-1 1H3.500a1 1 0 0 1-1-1v-11a1 1 0 0 1 1-1z" /><path d="M8.500 1.500v4.500H13z" /></Icon>
            <Address role="textbox" aria-label="Dirección"><strong>localhost</strong>:3000/studio/bot_jirka/flows/main</Address>
            <IconButton aria-label="Marcador"><Star size={17} strokeWidth={1.800} /></IconButton>
          </AddressBar>
          <NavTools>
            <IconButton aria-label="Pocket"><Icon size={18} box={18}><path {...line(1.400)} d="M3 3h12a1 1 0 0 1 1 1v4.500a7 7 0 0 1-14 0V4a1 1 0 0 1 1-1zM5.500 7.500 9 11l3.500-3.500" /></Icon></IconButton>
            <IconButton aria-label="Cuenta"><Account>C</Account></IconButton>
            <IconButton aria-label="Extensiones"><Icon size={18} box={18}><path {...line(1.400)} d="M7 5V3.500a2 2 0 0 1 4 0V5h4v11H3v-3.500h1.500a1.800 1.800 0 0 0 0-3.600H3V6.500L4.500 5z" /></Icon></IconButton>
            <IconButton aria-label="Menú"><Menu size={18} strokeWidth={1.700} /></IconButton>
          </NavTools>
        </NavBar>

        <Studio>
          <SideBar>
            <SideLogo href="#" aria-label="Botpress"><ShareIcon size={19} bg="#fff" fg="#191d20" /></SideLogo>
            {sideIcons.map((icon, i) => <SideItem key={i} $active={i === 0} aria-label={sideNames[i]}>{icon}</SideItem>)}
          </SideBar>

          <StudioMain>
            <TopBar>
              <TopAction>
                <Icon><circle cx="8" cy="8" r="8" /><path d="M5.600 6.200C5.600 3 10.500 3.200 10.500 6c0 1.800-2.300 1.900-2.300 3.600" fill="none" stroke="#fff" strokeWidth="1.900" /><circle cx="8.200" cy="12" r="1.200" fill="#fff" /></Icon>
                Tutorial
              </TopAction>
              <TopAction>
                <Icon><path fillRule="evenodd" d="M0 1h16v14H0zm1.700 3v9.300h12.600V4z" /><path {...line(1.700)} d="m3.500 6 2.500 2.500L3.500 11M8 11h4" /></Icon>
                Bottom Panel
              </TopAction>
              <TopAction><ChatIcon />Emulador</TopAction>
            </TopBar>

            <Panels>
              <FlowsPanel>
                <FlowsHeader>
                  <Icon size={8} box={8}><path d="M0 2h8L4 7z" /></Icon>
                  <h2>Flujos</h2>
                  <IconButton aria-label="Añadir flujo">
                    <Icon><g color="#4d6373"><circle cx="8" cy="8" r="7" {...line(1.900)} /><path {...line(2)} d="M8 4v8M4 8h8" /></g></Icon>
                  </IconButton>
                </FlowsHeader>
                <FlowSearch>
                  <SearchBox>
                    <Icon size={13} box={14}><path d="M0 0h14v1.500L9 7.500V12l-4 2.500v-7L0 1.500z" /></Icon>
                    <input placeholder="Filtrar Flujos" aria-label="Filtrar Flujos" />
                  </SearchBox>
                </FlowSearch>
                <FlowList>
                  <li>
                    <FlowLink href="#main" $active>
                      <Icon><circle cx="13" cy="8" r="3" /><path {...line(2)} d="M0 8h9M5.500 4 9 8l-3.500 4" /></Icon>
                      Main
                    </FlowLink>
                  </li>
                  <li>
                    <FlowLink href="#error">
                      <Icon><circle cx="8" cy="4.500" r="2.200" {...line(1.900)} /><path {...line(2)} d="m.5 13 5.500-6M10 6.500l4 5M15 7.500V13H9.500" /></Icon>
                      Error handling
                    </FlowLink>
                  </li>
                </FlowList>
              </FlowsPanel>

              <Workflow>
                <PanelHeader $left={16} $right={21}>
                  <PanelTab>WORKFLOW</PanelTab>
                  <HeaderTools $gap={3}>
                    <SearchBox $width={190}><input placeholder="Filtrar Nodos" aria-label="Filtrar Nodos" /></SearchBox>
                    <HeaderTools $gap={8}>
                      <IconButton aria-label="Deshacer"><UndoIcon /></IconButton>
                      <IconButton aria-label="Rehacer"><UndoIcon flip /></IconButton>
                    </HeaderTools>
                  </HeaderTools>
                </PanelHeader>
                <WorkflowCanvas />
              </Workflow>

              <Emulator>
                <PanelHeader $left={12} $right={16}>
                  <PanelTab>EMULATOR</PanelTab>
                  <HeaderTools $gap={12}>
                    <IconButton aria-label="Reiniciar"><Icon><g color="#191d20"><path {...line(1.300)} d="M2.500 6.500A6 6 0 1 1 8.500 14" /><path d="M0 5.500h5.500L2.500 9z" /></g></Icon></IconButton>
                    <IconButton aria-label="Más"><Icon size={22} box={22}><g fill="#191d20"><circle cx="3" cy="12" r="2.700" /><circle cx="11" cy="12" r="2.700" /><circle cx="19" cy="12" r="2.700" /></g></Icon></IconButton>
                  </HeaderTools>
                </PanelHeader>
                <ChatScroll>
                  <Messages>
                    {chat.map((m, i) => m.from === "bot" ? (
                      <BotLine key={i}><ShareIcon size={20} bg="#191d20" fg="#fff" /><BotBubble>{m.text}</BotBubble></BotLine>
                    ) : (
                      <UserBubble key={i}>{m.text}</UserBubble>
                    ))}
                  </Messages>
                  <ScrollTrack><ScrollThumb /></ScrollTrack>
                </ChatScroll>
                <Composer>
                  <textarea placeholder="Decir algo a Bot Emulator" aria-label="Mensaje" />
                  <button type="button">Enviar</button>
                </Composer>
              </Emulator>
            </Panels>
          </StudioMain>
        </Studio>

        <StatusBar>
          <span>12.30.6</span>
          <strong>bot_jirka</strong>
          <span>No se pudo entrenar el Chatbot</span>
        </StatusBar>
      </Window>

      <BackWindow aria-hidden="true"><span>Danny Ortiz</span><span>10/3</span></BackWindow>

      <Dock>
        <DockGroup apps={leftApps} />
        <DockSeparator />
        <DockGroup apps={rightApps} />
        <DockSeparator />
        <DockGroup apps={placeApps} />
      </Dock>
    </Desktop>
  );
}
